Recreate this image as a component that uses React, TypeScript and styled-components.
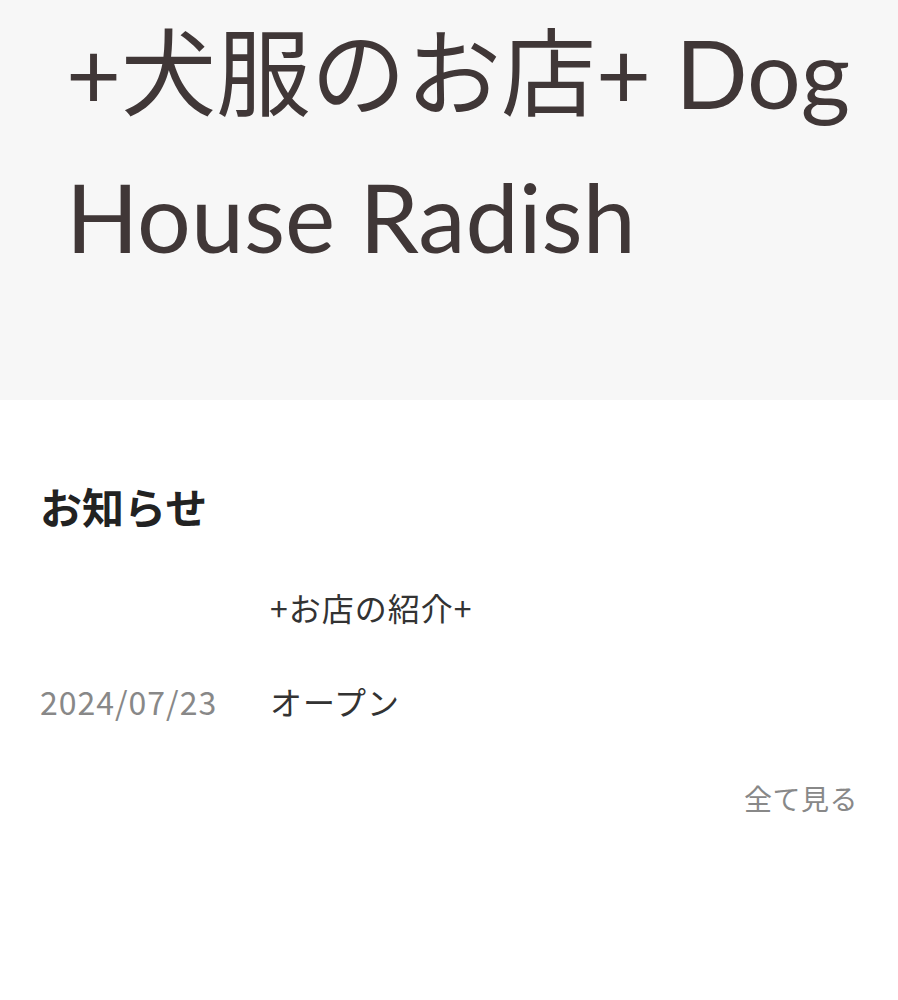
import * as React from 'react';
import styled, { createGlobalStyle } from 'styled-components';

const GlobalStyle = createGlobalStyle`
  html, body {
    margin: 0;
    padding: 0;
    background: #fff;
  }
  body {
    font-family: 'Noto Sans CJK JP', 'Noto Sans', sans-serif;
    color: #333;
  }
`;

const Hero = styled.header`
  background-color: #f7f7f7;
  height: 400px;
  box-sizing: border-box;
  padding: 0 40px 0 66px;
`;

const Title = styled.h1`
  margin: 0;
  font-family: 'Lato', 'Noto Sans CJK JP', sans-serif;
  font-weight: 400;
  font-size: 95px;
  line-height: 144px;
  color: #403737;
`;

const News = styled.section`
  padding: 81px 40px 60px;
`;

const Heading = styled.h2`
  margin: 0 0 29px;
  font-size: 42px;
  font-weight: 700;
  line-height: 50px;
  color: #222;
`;

const List = styled.ul`
  list-style: none;
  margin: 0;
  padding: 0;
`;

const Item = styled.li`
  display: grid;
  grid-template-columns: 230px 1fr;
  align-items: center;
  height: 94px;
  font-size: 32px;
  letter-spacing: 1px;
`;

const Date = styled.span`
  color: #888;
`;

const ItemTitle = styled.span`
  color: #333;
`;

const More = styled.div`
  display: flex;
  justify-content: flex-end;
  margin-top: 30px;
`;

const MoreLink = styled.a`
  font-size: 28px;
  letter-spacing: 0.5px;
  color: #888;
  text-decoration: none;
`;

interface NewsItem {
  date: string;
  title: string;
}

const items: NewsItem[] = [
  { date: '', title: '+お店の紹介+' },
  { date: '2024/07/23', title: 'オープン' },
];

export default function App() {
  return (
    <>
      <GlobalStyle />
      <Hero>
        <Title>+犬服のお店+ Dog House Radish</Title>
      </Hero>
      <News>
        <Heading>お知らせ</Heading>
        <List>
          {items.map((item, i) => (
            <Item key={i}>
              <Date>{item.date}</Date>
              <ItemTitle>{item.title}</ItemTitle>
            </Item>
          ))}
        </List>
        <More>
          <MoreLink href="#">全て見る</MoreLink>
        </More>
      </News>
    </>
  );
}
